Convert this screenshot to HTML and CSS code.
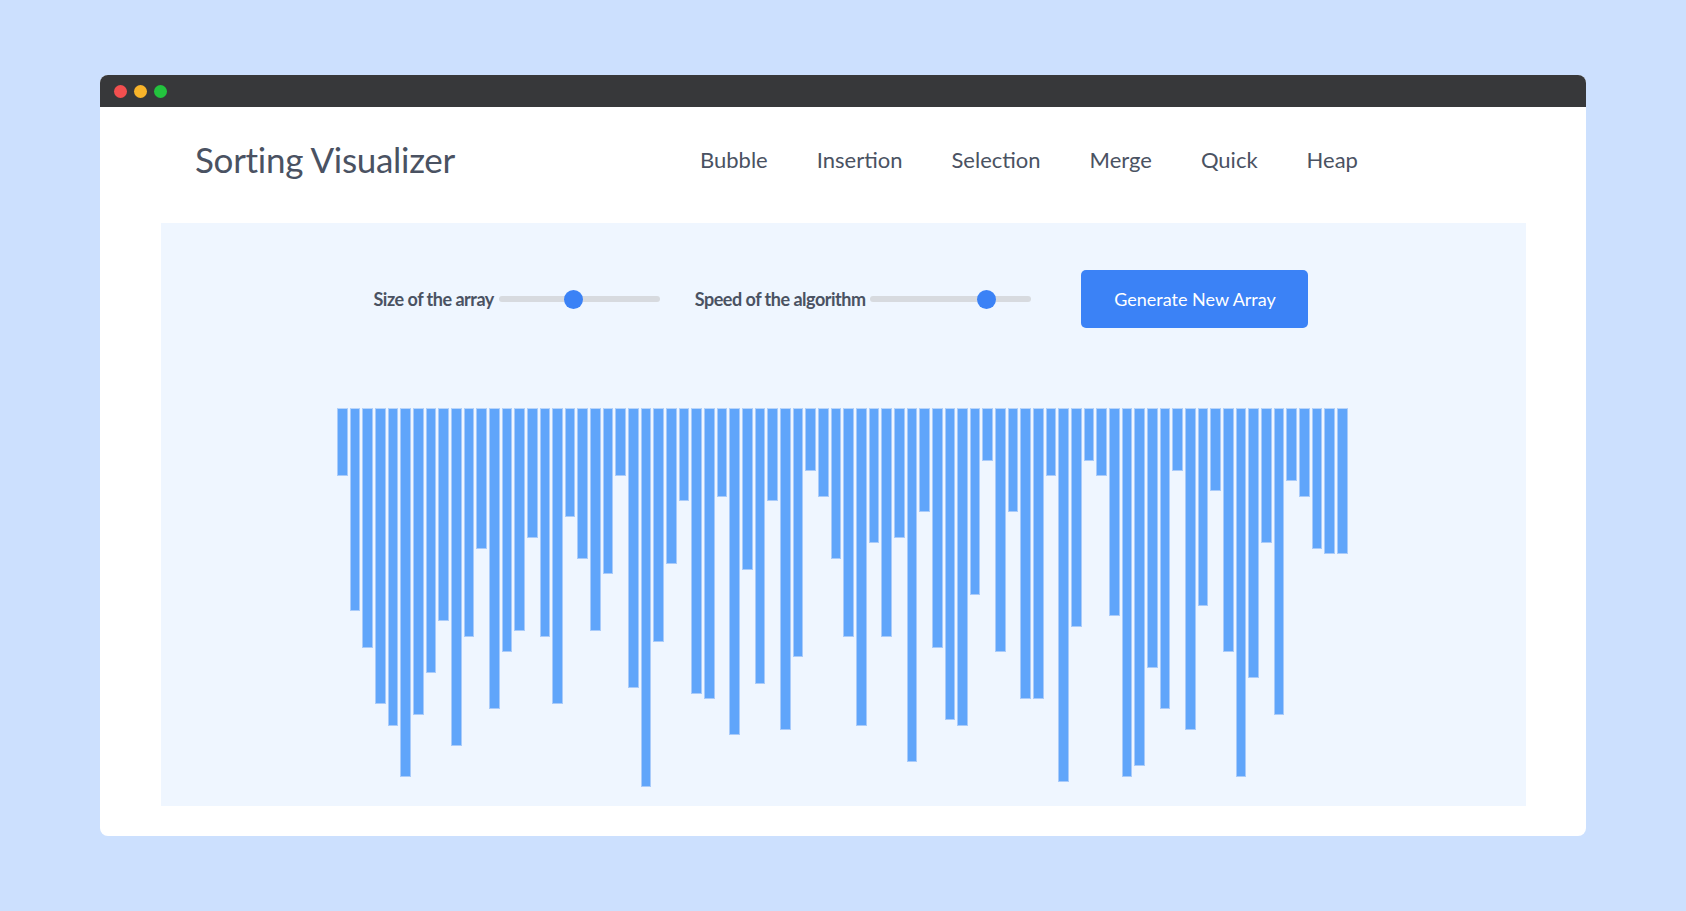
FILE: index.html
```html
<!DOCTYPE html>
<html lang="en">
<head>
<meta charset="utf-8">
<title>Sorting Visualizer</title>
<link rel="stylesheet" href="styles.css">
</head>
<body>
<div class="window">
  <div class="titlebar">
    <span class="dot dot-red"></span>
    <span class="dot dot-yellow"></span>
    <span class="dot dot-green"></span>
  </div>
  <div class="content">
    <header class="header">
      <h1 class="brand">Sorting Visualizer</h1>
      <nav class="nav">
        <a class="nav-link">Bubble</a>
        <a class="nav-link">Insertion</a>
        <a class="nav-link">Selection</a>
        <a class="nav-link">Merge</a>
        <a class="nav-link">Quick</a>
        <a class="nav-link">Heap</a>
      </nav>
    </header>
    <main class="panel">
      <div class="controls">
        <label class="control">
          <span class="control-label">Size of the array</span>
          <input class="slider" type="range" min="0" max="100" value="46">
        </label>
        <label class="control">
          <span class="control-label">Speed of the algorithm</span>
          <input class="slider" type="range" min="0" max="100" value="75">
        </label>
        <button class="generate">Generate New Array</button>
      </div>
      <div class="bars">
        <div class="bar" style="height:68px"></div>
        <div class="bar" style="height:203px"></div>
        <div class="bar" style="height:240px"></div>
        <div class="bar" style="height:296px"></div>
        <div class="bar" style="height:318px"></div>
        <div class="bar" style="height:369px"></div>
        <div class="bar" style="height:307px"></div>
        <div class="bar" style="height:265px"></div>
        <div class="bar" style="height:213px"></div>
        <div class="bar" style="height:338px"></div>
        <div class="bar" style="height:229px"></div>
        <div class="bar" style="height:141px"></div>
        <div class="bar" style="height:301px"></div>
        <div class="bar" style="height:244px"></div>
        <div class="bar" style="height:223px"></div>
        <div class="bar" style="height:130px"></div>
        <div class="bar" style="height:229px"></div>
        <div class="bar" style="height:296px"></div>
        <div class="bar" style="height:109px"></div>
        <div class="bar" style="height:151px"></div>
        <div class="bar" style="height:223px"></div>
        <div class="bar" style="height:166px"></div>
        <div class="bar" style="height:68px"></div>
        <div class="bar" style="height:280px"></div>
        <div class="bar" style="height:379px"></div>
        <div class="bar" style="height:234px"></div>
        <div class="bar" style="height:156px"></div>
        <div class="bar" style="height:93px"></div>
        <div class="bar" style="height:286px"></div>
        <div class="bar" style="height:291px"></div>
        <div class="bar" style="height:89px"></div>
        <div class="bar" style="height:327px"></div>
        <div class="bar" style="height:162px"></div>
        <div class="bar" style="height:276px"></div>
        <div class="bar" style="height:93px"></div>
        <div class="bar" style="height:322px"></div>
        <div class="bar" style="height:249px"></div>
        <div class="bar" style="height:63px"></div>
        <div class="bar" style="height:89px"></div>
        <div class="bar" style="height:151px"></div>
        <div class="bar" style="height:229px"></div>
        <div class="bar" style="height:318px"></div>
        <div class="bar" style="height:135px"></div>
        <div class="bar" style="height:229px"></div>
        <div class="bar" style="height:130px"></div>
        <div class="bar" style="height:354px"></div>
        <div class="bar" style="height:104px"></div>
        <div class="bar" style="height:240px"></div>
        <div class="bar" style="height:312px"></div>
        <div class="bar" style="height:318px"></div>
        <div class="bar" style="height:187px"></div>
        <div class="bar" style="height:53px"></div>
        <div class="bar" style="height:244px"></div>
        <div class="bar" style="height:104px"></div>
        <div class="bar" style="height:291px"></div>
        <div class="bar" style="height:291px"></div>
        <div class="bar" style="height:68px"></div>
        <div class="bar" style="height:374px"></div>
        <div class="bar" style="height:219px"></div>
        <div class="bar" style="height:53px"></div>
        <div class="bar" style="height:68px"></div>
        <div class="bar" style="height:208px"></div>
        <div class="bar" style="height:369px"></div>
        <div class="bar" style="height:358px"></div>
        <div class="bar" style="height:260px"></div>
        <div class="bar" style="height:301px"></div>
        <div class="bar" style="height:63px"></div>
        <div class="bar" style="height:322px"></div>
        <div class="bar" style="height:198px"></div>
        <div class="bar" style="height:83px"></div>
        <div class="bar" style="height:244px"></div>
        <div class="bar" style="height:369px"></div>
        <div class="bar" style="height:270px"></div>
        <div class="bar" style="height:135px"></div>
        <div class="bar" style="height:307px"></div>
        <div class="bar" style="height:73px"></div>
        <div class="bar" style="height:89px"></div>
        <div class="bar" style="height:141px"></div>
        <div class="bar" style="height:146px"></div>
        <div class="bar" style="height:146px"></div>
      </div>
    </main>
  </div>
</div>
</body>
</html>
```

FILE: styles.css
```css
* {
  box-sizing: border-box;
}

html, body {
  margin: 0;
  padding: 0;
}

body {
  width: 1686px;
  height: 911px;
  background: #cce0fe;
  display: flex;
  align-items: center;
  justify-content: center;
  font-family: Lato, "Noto Sans", sans-serif;
  color: #4a5262;
}

.window {
  width: 1486px;
  height: 761px;
  background: #ffffff;
  border-radius: 8px;
  overflow: hidden;
  display: flex;
  flex-direction: column;
}

.titlebar {
  height: 32px;
  flex: none;
  background: #37383a;
  display: flex;
  align-items: center;
  gap: 7px;
  padding-left: 14px;
}

.dot {
  width: 13px;
  height: 13px;
  border-radius: 50%;
}

.dot-red { background: #f24f4f; }
.dot-yellow { background: #f8b42a; }
.dot-green { background: #23c33e; }

.content {
  flex: 1;
  display: flex;
  flex-direction: column;
  padding: 0 60px 30px 61px;
}

.header {
  height: 116px;
  flex: none;
  display: flex;
  align-items: center;
  padding-left: 34px;
  padding-bottom: 12px;
}

.brand {
  margin: 0;
  width: 505px;
  font-size: 35px;
  font-weight: 400;
  color: #4a5262;
  letter-spacing: -0.3px;
}

.nav {
  display: flex;
  gap: 49px;
}

.nav-link {
  font-size: 22px;
  color: #4a5262;
  cursor: pointer;
}

.panel {
  flex: 1;
  background: #eff6ff;
  display: flex;
  flex-direction: column;
  align-items: center;
  padding-top: 47px;
}

.controls {
  display: flex;
  align-items: center;
  gap: 35px;
  height: 58px;
  margin-right: 5px;
}

.control {
  display: flex;
  align-items: center;
  gap: 5px;
}

.control-label {
  font-size: 18px;
  font-weight: 700;
  color: #4a5262;
  letter-spacing: -0.5px;
}

.slider {
  -webkit-appearance: none;
  appearance: none;
  width: 161px;
  height: 6px;
  margin: 0;
  border-radius: 3px;
  background: #d7dadf;
  outline: none;
}

.slider::-webkit-slider-thumb {
  -webkit-appearance: none;
  appearance: none;
  width: 19px;
  height: 19px;
  border-radius: 50%;
  background: #3b82f6;
  border: none;
}

.generate {
  margin-left: 15px;
  width: 227px;
  height: 58px;
  border: none;
  border-radius: 5px;
  background: #3b82f6;
  color: #ffffff;
  font-family: Lato, "Noto Sans", sans-serif;
  font-size: 18px;
  cursor: pointer;
}

.bars {
  margin-top: 80px;
  margin-right: 3px;
  width: 1012px;
  display: flex;
  align-items: flex-start;
}

.bar {
  flex: 1;
  margin: 0 1px;
  background: #60a5fa;
  border: 1px solid #a9cbfa;
  border-top-color: #b7d4fb;
}
```
